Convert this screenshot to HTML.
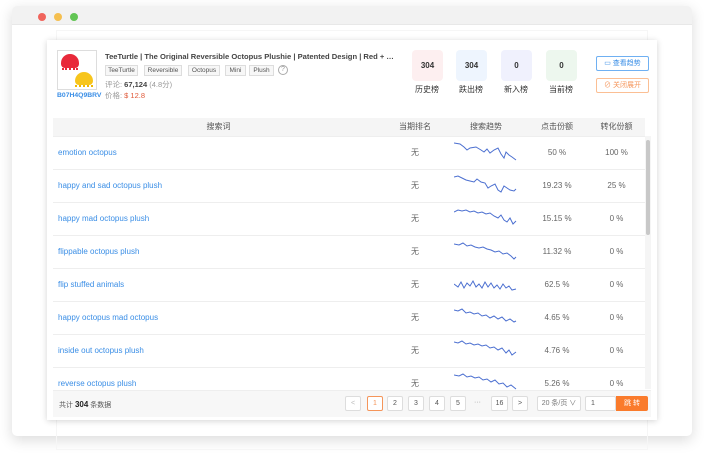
<!DOCTYPE html><html><head><meta charset="utf-8"><style>
*{box-sizing:border-box;margin:0;padding:0}
body{width:704px;height:454px;background:#fff;font-family:"Liberation Sans","Noto Sans CJK SC",sans-serif;position:relative;overflow:hidden;font-size:8px;color:#333}
.win{position:absolute;left:12px;top:6px;width:680px;height:430px;background:#fff;border-radius:5px;box-shadow:0 4px 14px rgba(0,0,0,.15);overflow:hidden}
.tb{height:19px;background:#f2f2f2;border-bottom:1px solid #e8e8e8}
.dot{position:absolute;top:7px;width:8px;height:8px;border-radius:50%}
.bg{position:absolute;left:56px;top:30px;width:592px;height:420px;border:1px solid #f6f6f6}
.card{position:absolute;left:47px;top:40px;width:610px;height:380px;background:#fff;box-shadow:0 1px 6px rgba(0,0,0,.18)}
.a{position:absolute}
.tag{position:absolute;top:25px;height:11px;border:1px solid #ddd;background:#f7f7f7;font-size:6.5px;color:#555;line-height:9px;text-align:center;white-space:nowrap;overflow:hidden}
.st{position:absolute;top:10px;width:31px;height:31px;border-radius:4px;font-size:8px;font-weight:bold;text-align:center;line-height:31px}
.sl{position:absolute;top:44px;width:40px;text-align:center;font-size:8px;color:#333}
table{border-collapse:collapse;position:absolute;left:6px;top:78px;width:592px;font-size:8px}
th{background:#f5f5f5;height:18px;font-weight:normal;color:#555;border-bottom:1px solid #eee}
td{height:33px;border-bottom:1px solid #eee;text-align:center;color:#666}
td.k{text-align:left;padding-left:5px;color:#3a8ee6}
.pg{position:absolute;top:356px;height:15px;border:1px solid #ddd;border-radius:2px;font-size:7px;text-align:center;line-height:13px;color:#555;background:#fff}
</style></head><body>
<div class="win"><div class="tb"></div>
<div class="dot" style="left:26px;background:#f0645c"></div><div class="dot" style="left:42px;background:#f5bf4f"></div><div class="dot" style="left:58px;background:#62c554"></div>
</div>
<div class="bg"></div>
<div class="card">
<div class="a" style="left:10px;top:10px;width:40px;height:40px;border:1px solid #ddd;background:#fff;overflow:hidden">
<div class="a" style="left:3px;top:3px;width:18px;height:14px;background:#e8293a;border-radius:9px 9px 4px 4px"></div>
<div class="a" style="left:4px;top:15px;width:16px;height:4px;border-bottom:2px dotted #e8293a"></div>
<div class="a" style="left:17px;top:21px;width:18px;height:13px;background:#f7c51c;border-radius:9px 9px 4px 4px"></div>
<div class="a" style="left:17px;top:32px;width:18px;height:4px;border-bottom:2px dotted #f0b800"></div></div>
<div class="a" style="left:10px;top:52px;font-size:6.8px;color:#3a8ee6;font-weight:bold">B07H4Q9BRV</div>
<div class="a" style="left:58px;top:12px;width:292px;font-size:7.6px;font-weight:bold;color:#444;white-space:nowrap;overflow:hidden;text-overflow:ellipsis">TeeTurtle | The Original Reversible Octopus Plushie | Patented Design | Red + Yellow</div>
<div class="tag" style="left:58px;width:33px">TeeTurtle</div><div class="tag" style="left:97px;width:38px">Reversible</div><div class="tag" style="left:141px;width:32px">Octopus</div><div class="tag" style="left:178px;width:21px">Mini</div><div class="tag" style="left:202px;width:25px">Plush</div>
<div class="a" style="left:231px;top:25px;width:10px;height:10px;border:1px solid #aaa;border-radius:50%;font-size:7px;text-align:center;line-height:8px;color:#999">?</div>
<div class="a" style="left:58px;top:39px;font-size:7.5px;color:#999">评论: <b style="color:#444">67,124</b> (4.8分)</div>
<div class="a" style="left:58px;top:50px;font-size:7.5px;color:#999">价格: <b style="color:#e05a3a;font-weight:normal">$ 12.8</b></div>
<div class="st" style="left:365px;background:#fdeff0">304</div><div class="sl" style="left:360px">历史榜</div>
<div class="st" style="left:409px;background:#eef5fe">304</div><div class="sl" style="left:404px">跌出榜</div>
<div class="st" style="left:454px;background:#f0f1fd">0</div><div class="sl" style="left:449px">新入榜</div>
<div class="st" style="left:499px;background:#edf7ee">0</div><div class="sl" style="left:494px">当前榜</div>
<div class="a" style="left:549px;top:16px;width:53px;height:15px;border:1px solid #6fb0f2;border-radius:2px;font-size:7px;color:#3a8ee6;text-align:center;line-height:13px">▭ 查看趋势</div>
<div class="a" style="left:549px;top:38px;width:53px;height:15px;border:1px solid #fbbf94;border-radius:2px;font-size:7px;color:#f5955a;text-align:center;line-height:13px">⊘ 关闭展开</div>
<table>
<tr><th style="width:331px">搜索词</th><th style="width:62px">当期排名</th><th style="width:80px">搜索趋势</th><th style="width:62px">点击份额</th><th>转化份额</th></tr>
<tr><td class="k">emotion octopus</td><td>无</td><td><svg width="64" height="24"><polyline fill="none" stroke="#4b6fd0" stroke-width="1" points="0,3 6,4 10,7 13,10 16,8 22,7 27,10 30,12 33,9 36,13 40,10 44,8 47,14 50,18 52,12 55,15 58,17 62,20"/></svg></td><td>50 %</td><td>100 %</td></tr>
<tr><td class="k">happy and sad octopus plush</td><td>无</td><td><svg width="64" height="24"><polyline fill="none" stroke="#4b6fd0" stroke-width="1" points="0,4 4,3 8,5 12,7 16,8 20,9 23,6 27,9 31,10 34,15 37,13 41,11 44,17 47,19 50,13 53,15 56,17 60,18 62,16"/></svg></td><td>19.23 %</td><td>25 %</td></tr>
<tr><td class="k">happy mad octopus plush</td><td>无</td><td><svg width="64" height="24"><polyline fill="none" stroke="#4b6fd0" stroke-width="1" points="0,6 4,4 8,5 12,4 16,6 20,5 24,7 28,6 32,8 36,7 40,10 44,12 47,9 50,14 53,16 56,12 59,18 62,15"/></svg></td><td>15.15 %</td><td>0 %</td></tr>
<tr><td class="k">flippable octopus plush</td><td>无</td><td><svg width="64" height="24"><polyline fill="none" stroke="#4b6fd0" stroke-width="1" points="0,5 5,6 9,4 13,7 17,6 21,8 25,9 29,8 33,10 37,11 41,13 45,12 49,15 53,14 57,17 60,20 62,18"/></svg></td><td>11.32 %</td><td>0 %</td></tr>
<tr><td class="k">flip stuffed animals</td><td>无</td><td><svg width="64" height="24"><polyline fill="none" stroke="#4b6fd0" stroke-width="1" points="0,12 4,15 7,10 10,16 13,11 16,14 19,9 22,15 25,12 28,16 31,10 34,15 37,11 40,16 43,13 46,17 49,12 52,16 55,14 58,18 62,17"/></svg></td><td>62.5 %</td><td>0 %</td></tr>
<tr><td class="k">happy octopus mad octopus</td><td>无</td><td><svg width="64" height="24"><polyline fill="none" stroke="#4b6fd0" stroke-width="1" points="0,5 4,6 8,4 12,8 16,7 20,9 24,8 28,11 32,10 36,13 40,11 44,14 48,12 52,16 56,14 60,17 62,16"/></svg></td><td>4.65 %</td><td>0 %</td></tr>
<tr><td class="k">inside out octopus plush</td><td>无</td><td><svg width="64" height="24"><polyline fill="none" stroke="#4b6fd0" stroke-width="1" points="0,4 4,5 8,3 12,6 16,5 20,7 24,6 28,8 32,7 36,10 40,9 44,12 48,10 52,15 55,12 58,17 62,14"/></svg></td><td>4.76 %</td><td>0 %</td></tr>
<tr><td class="k">reverse octopus plush</td><td>无</td><td><svg width="64" height="24"><polyline fill="none" stroke="#4b6fd0" stroke-width="1" points="0,4 5,5 9,3 13,6 17,5 21,7 25,6 29,9 33,8 37,11 41,9 45,13 49,12 53,16 57,14 62,18"/></svg></td><td>5.26 %</td><td>0 %</td></tr>
</table>
<div class="a" style="left:598px;top:96px;width:6px;height:253px;background:#f5f5f5"></div>
<div class="a" style="left:599px;top:100px;width:4px;height:95px;background:#c8c8c8;border-radius:2px"></div>
<div class="a" style="left:6px;top:350px;width:598px;height:27px;background:#f7f7f7;border-top:1px solid #eee"></div>
<div class="a" style="left:12px;top:360px;font-size:7px;color:#555">共计 <b style="color:#222;font-size:8px">304</b> 条数据</div>
<div class="pg" style="left:298px;width:16px;color:#bbb">&lt;</div>
<div class="pg" style="left:320px;width:16px;border-color:#f5955a;color:#f5955a">1</div>
<div class="pg" style="left:340px;width:16px">2</div><div class="pg" style="left:361px;width:16px">3</div><div class="pg" style="left:382px;width:16px">4</div><div class="pg" style="left:403px;width:16px">5</div>
<div class="a" style="left:427px;top:359px;font-size:7px;color:#999">···</div>
<div class="pg" style="left:444px;width:17px">16</div>
<div class="pg" style="left:465px;width:16px">&gt;</div>
<div class="pg" style="left:490px;width:44px;color:#777">20 条/页 ∨</div>
<div class="pg" style="left:538px;width:31px;text-align:left;padding-left:5px">1</div>
<div class="a" style="left:569px;top:356px;width:32px;height:15px;background:#fa7b2c;color:#fff;font-size:7px;text-align:center;line-height:15px;border-radius:0 2px 2px 0">跳 转</div>
</div>
</body></html>
